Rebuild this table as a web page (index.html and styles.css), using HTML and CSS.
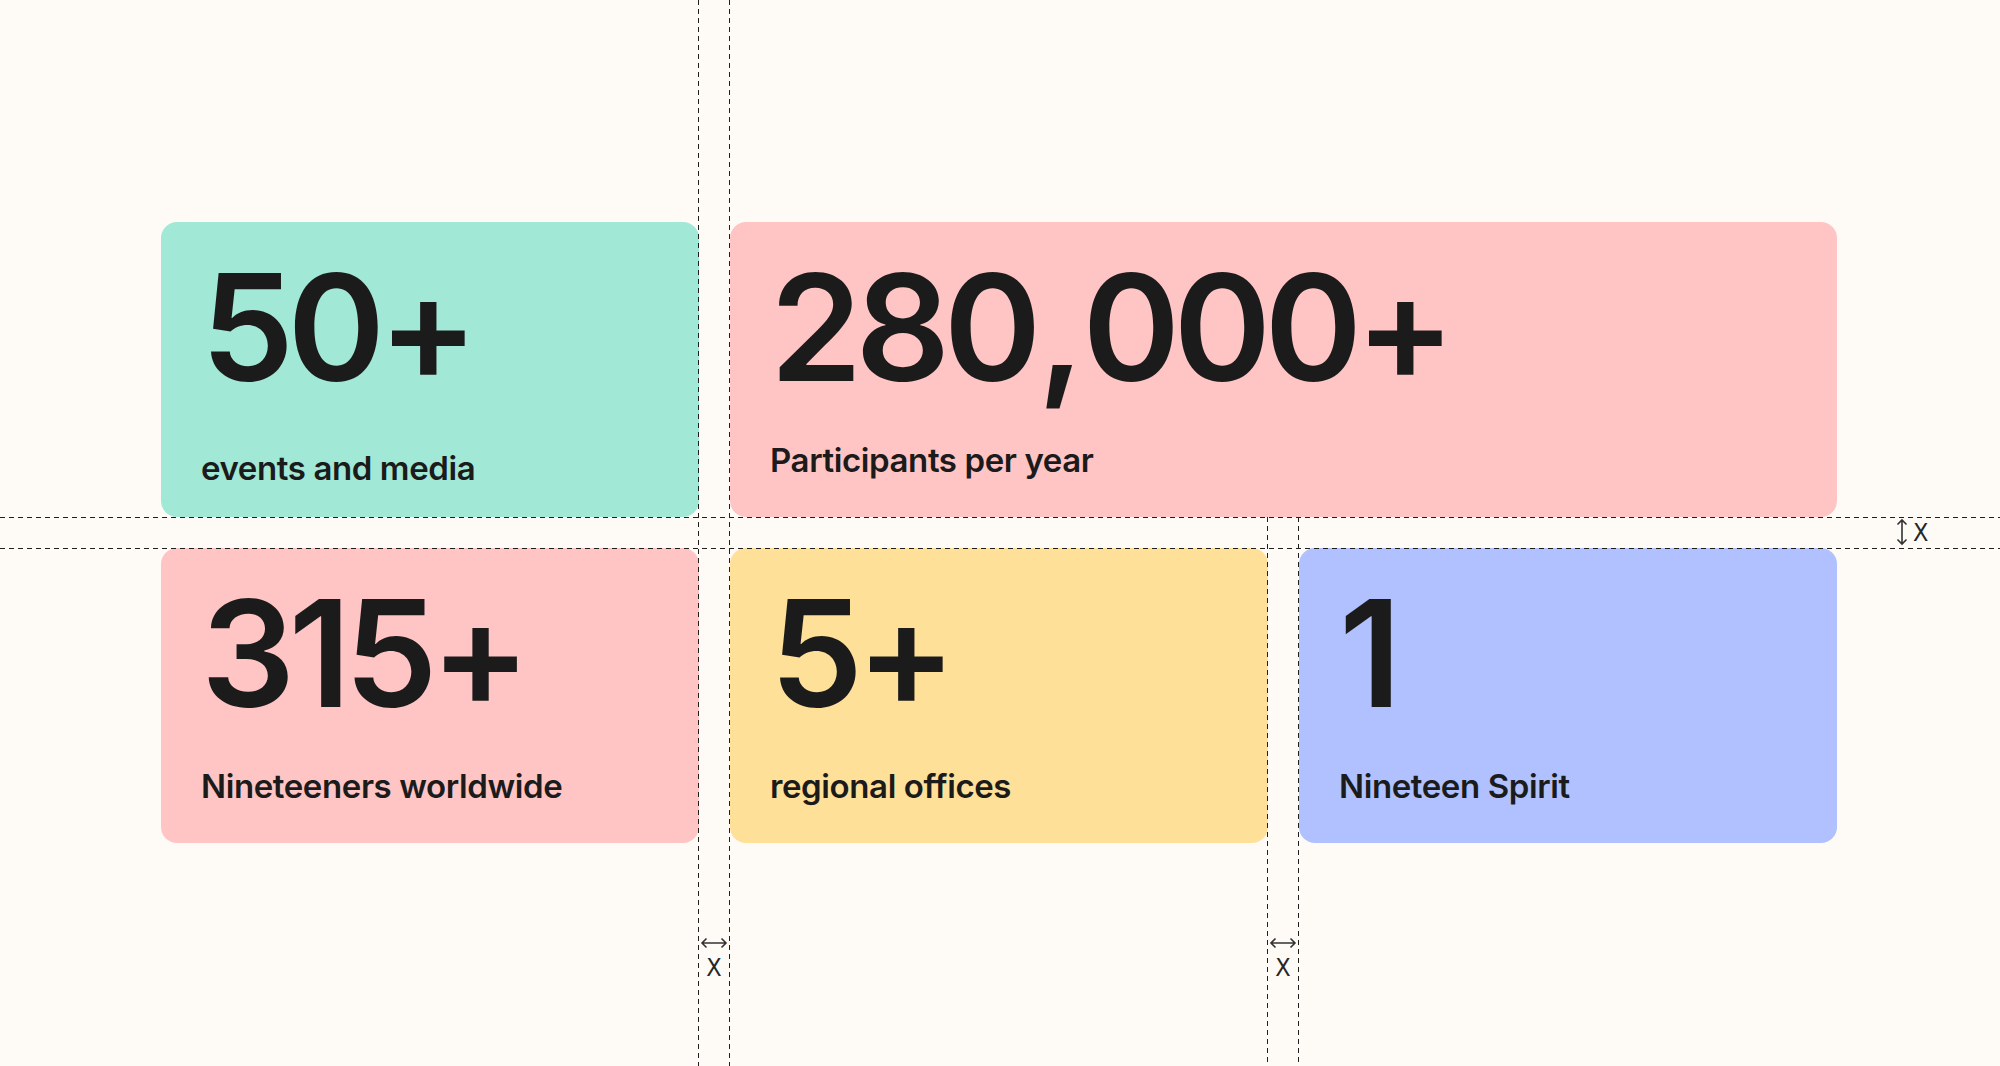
FILE: index.html
```html
<!DOCTYPE html>
<html lang="en">
<head>
<meta charset="utf-8">
<title>Stats</title>
<link rel="stylesheet" href="styles.css">
</head>
<body>
<div class="stage">
  <section class="stats">
    <div class="card card--teal card--low">
      <div class="num">50+</div>
      <div class="label">events and media</div>
    </div>
    <div class="card card--pink card--wide">
      <div class="num">280<span class="sep">,</span>000+</div>
      <div class="label">Participants per year</div>
    </div>
    <div class="card card--pink">
      <div class="num">315+</div>
      <div class="label">Nineteeners worldwide</div>
    </div>
    <div class="card card--yellow">
      <div class="num">5+</div>
      <div class="label">regional offices</div>
    </div>
    <div class="card card--blue">
      <div class="num">1</div>
      <div class="label">Nineteen Spirit</div>
    </div>
  </section>

  <div class="guide guide--h guide--h1"></div>
  <div class="guide guide--h guide--h2"></div>
  <div class="guide guide--v guide--v1"></div>
  <div class="guide guide--v guide--v2"></div>
  <div class="guide guide--v guide--v3"></div>
  <div class="guide guide--v guide--v4"></div>

  <div class="measure measure--vgap">
    <svg width="14" height="28" viewBox="0 0 14 28" class="arrow-v">
      <path d="M7 2 V26 M2.5 6.5 L7 2 L11.5 6.5 M2.5 21.5 L7 26 L11.5 21.5" fill="none" stroke="#333" stroke-width="1.6"/>
    </svg>
    <span class="x">X</span>
  </div>
  <div class="measure measure--hgap measure--hgap1">
    <svg width="28" height="14" viewBox="0 0 28 14" class="arrow-h">
      <path d="M2 7 H26 M6.5 2.5 L2 7 L6.5 11.5 M21.5 2.5 L26 7 L21.5 11.5" fill="none" stroke="#333" stroke-width="1.6"/>
    </svg>
    <span class="x">X</span>
  </div>
  <div class="measure measure--hgap measure--hgap2">
    <svg width="28" height="14" viewBox="0 0 28 14" class="arrow-h">
      <path d="M2 7 H26 M6.5 2.5 L2 7 L6.5 11.5 M21.5 2.5 L26 7 L21.5 11.5" fill="none" stroke="#333" stroke-width="1.6"/>
    </svg>
    <span class="x">X</span>
  </div>
</div>
</body>
</html>
```

FILE: styles.css
```css
html, body {
  margin: 0;
  padding: 0;
}
body {
  background: #fefbf7;
  font-family: Inter, "Noto Sans", sans-serif;
  color: #1b1b1b;
}
.stage {
  position: relative;
  width: 2000px;
  height: 1066px;
  overflow: hidden;
  padding: 222px 0 0 161px;
  box-sizing: border-box;
}
.stats {
  display: grid;
  grid-template-columns: repeat(3, 538px);
  grid-template-rows: 295px 295px;
  gap: 31px;
}
.card {
  border-radius: 16px;
  padding: 32px 40px 36px 40px;
  display: flex;
  flex-direction: column;
  justify-content: space-between;
  box-sizing: border-box;
}
.card--low { padding-bottom: 28px; }
.card--wide { grid-column: span 2; }
.card--teal { background: #a1e8d6; }
.card--pink { background: #ffc5c5; }
.card--yellow { background: #ffe099; }
.card--blue { background: #b1c1ff; }

.num {
  font-size: 148px;
  line-height: 1;
  font-weight: 600;
  letter-spacing: -0.045em;
}
.sep {
  margin: 0 0.03em 0 0.02em;
}
.label {
  font-size: 33px;
  line-height: 1.2;
  font-weight: 600;
  letter-spacing: -0.012em;
}

.guide {
  position: absolute;
}
.guide--h {
  left: 0;
  width: 2000px;
  height: 1px;
  background: repeating-linear-gradient(90deg, #1f1f1f 0 5px, transparent 5px 9px);
}
.guide--h1 { top: 517px; }
.guide--h2 { top: 548px; }
.guide--v {
  width: 1px;
  background: repeating-linear-gradient(180deg, #1f1f1f 0 5px, transparent 5px 9px);
}
.guide--v1 { left: 698px; top: 0; height: 1066px; }
.guide--v2 { left: 729px; top: 0; height: 1066px; }
.guide--v3 { left: 1267px; top: 517px; height: 549px; }
.guide--v4 { left: 1298px; top: 517px; height: 549px; }

.measure {
  position: absolute;
  display: flex;
  align-items: center;
  color: #262626;
  font-family: "DejaVu Sans Condensed", "DejaVu Sans", sans-serif;
  font-stretch: condensed;
  font-size: 25px;
  line-height: 1;
}
.measure svg { display: block; }
.measure--vgap {
  left: 1895px;
  top: 518px;
  gap: 4px;
}
.measure--hgap {
  flex-direction: column;
  gap: 5px;
  top: 936px;
  width: 30px;
}
.measure--hgap1 { left: 699px; }
.measure--hgap2 { left: 1268px; }
.x { font-weight: 400; }
```
